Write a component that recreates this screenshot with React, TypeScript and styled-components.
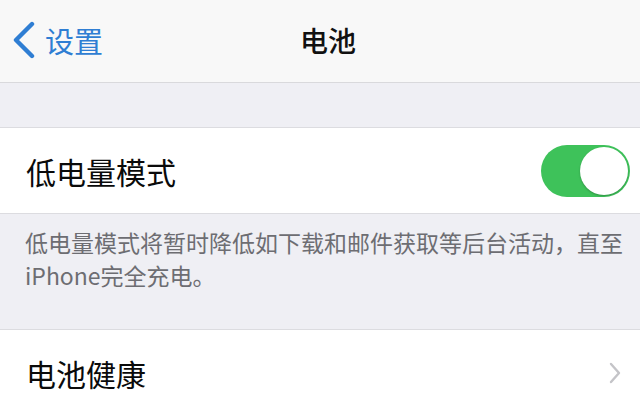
import { createGlobalStyle } from "styled-components"
import styled from "styled-components"

const GlobalStyle = createGlobalStyle`
  html, body {
    margin: 0;
    padding: 0;
    background: #efeff4;
    overflow: hidden;
  }
  body {
    font-family: "Noto Sans CJK SC", "Noto Sans", sans-serif;
    -webkit-font-smoothing: antialiased;
  }
`

const Screen = styled.div`
  width: 640px;
  height: 406px;
  background: #efeff4;
  display: flex;
  flex-direction: column;
`

const NavBar = styled.header`
  height: 82px;
  flex-shrink: 0;
  background: #f8f8f8;
  border-bottom: 1px solid #d9d9dc;
  display: grid;
  grid-template-columns: 1fr auto 1fr;
  align-items: center;
`

const BackButton = styled.div`
  display: flex;
  align-items: center;
  gap: 9px;
  padding-left: 12px;
  color: #2f7ed3;
  font-size: 29px;
  line-height: 1;
  padding-bottom: 2px;
`

const Title = styled.h1`
  margin: 0 0 0 16px;
  font-size: 28px;
  font-weight: 500;
  color: #111;
  padding-bottom: 2px;
`

const Spacer = styled.div`
  height: 44px;
  flex-shrink: 0;
  border-bottom: 1px solid #dcdce0;
`

const Cell = styled.div<{ $top?: boolean }>`
  height: 85px;
  flex-shrink: 0;
  background: #fff;
  display: flex;
  align-items: center;
  justify-content: space-between;
  padding: 0 10px 0 26px;
  border-bottom: 1px solid #dcdce0;
  border-top: ${({ $top }) => ($top ? "1px solid #dcdce0" : "none")};
`

const Label = styled.span`
  font-size: 30px;
  color: #0a0a0a;
`

const Toggle = styled.div<{ $on: boolean }>`
  width: 89px;
  height: 52px;
  border-radius: 26px;
  background: ${({ $on }) => ($on ? "#3ec25a" : "#e5e5ea")};
  position: relative;
`

const Knob = styled.div`
  position: absolute;
  top: 2px;
  right: 2px;
  width: 48px;
  height: 48px;
  border-radius: 50%;
  background: #fff;
  box-shadow: 0 1px 2px rgba(0, 0, 0, 0.25);
`

const Footer = styled.div`
  padding: 12px 0 37px 25px;
  display: flex;
  flex-direction: column;
`

const FooterLine = styled.span`
  font-size: 23px;
  line-height: 33px;
  color: #6d6d72;
  white-space: nowrap;
`

const Chevron = () => (
  <svg width="14" height="24" viewBox="0 0 14 24" style={{ marginRight: 8 }}>
    <path d="M3 3l8 9-8 9" fill="none" stroke="#c4c4c8" strokeWidth="2.4" strokeLinecap="round" strokeLinejoin="round" />
  </svg>
)

const BackArrow = () => (
  <svg width="24" height="38" viewBox="0 0 24 38">
    <path d="M20 3L4 19l16 16" fill="none" stroke="#2f7ed3" strokeWidth="4.4" strokeLinecap="round" strokeLinejoin="round" />
  </svg>
)

export default function App() {
  return (
    <>
      <GlobalStyle />
      <Screen>
        <NavBar>
          <BackButton>
            <BackArrow />
            设置
          </BackButton>
          <Title>电池</Title>
          <div />
        </NavBar>
        <Spacer />
        <Cell>
          <Label>低电量模式</Label>
          <Toggle $on>
            <Knob />
          </Toggle>
        </Cell>
        <Footer>
          <FooterLine>低电量模式将暂时降低如下载和邮件获取等后台活动，直至</FooterLine>
          <FooterLine>iPhone完全充电。</FooterLine>
        </Footer>
        <Cell $top>
          <Label>电池健康</Label>
          <Chevron />
        </Cell>
      </Screen>
    </>
  )
}
